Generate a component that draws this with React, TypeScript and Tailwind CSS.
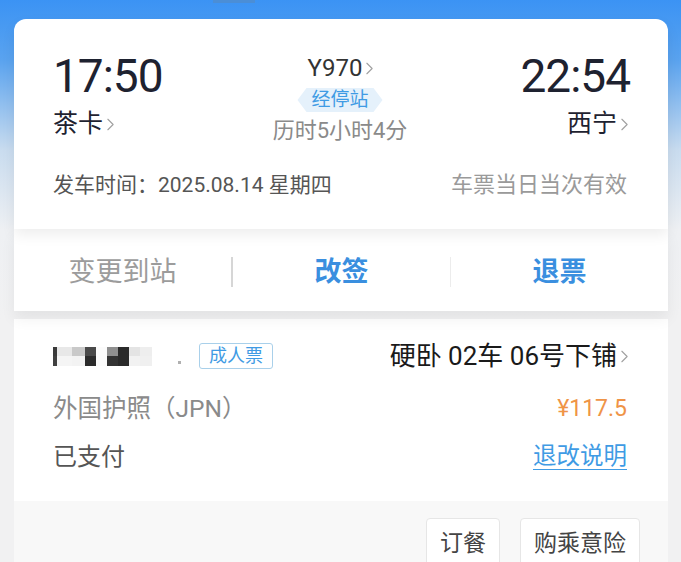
import { ChevronRight } from "lucide-react"

const font = { fontFamily: 'Roboto, "Noto Sans CJK SC", sans-serif' }

function Chevron() {
  return <ChevronRight className="-ml-[3px] -mr-[8px] inline-block h-[21px] w-[21px] shrink-0 text-[#a0a0a0]" strokeWidth={1.3} />
}

// pixelated (blurred) passenger name
const mosaicTop = ["#3a3a3a", "#e8e8e8", "#c9c9c9", "#4a4a4a", "#fbfbfb", "#8f8f8f", "#2a2a2a", "#e4e4e4", "#eeeeee"]
const mosaicBottom = ["#404040", "#f5f5f5", "#f3f3f3", "#2b2b2b", "#fbfbfb", "#333333", "#2a2a2a", "#f2f2f2", "#f0f0f0"]
const mosaicWidths = [4, 15, 13, 11, 11, 11, 11, 11, 12]

export default function App() {
  return (
    <div
      className="h-[562px] w-[681px] overflow-hidden bg-[linear-gradient(180deg,#3b93f4_0px,#5aa3ef_60px,#c9dcef_150px,#eef0f3_230px,#f1f1f2_320px)]"
      style={font}
    >
      <div className="ml-[213px] h-[3px] w-[42px] bg-[#4b8ed6]" />

      <div className="ml-[14px] mt-[16px] w-[654px]">
        {/* trip card */}
        <div className="relative z-10 rounded-t-[12px] bg-white pb-[30px] pl-[39px] pr-[41px] pt-[32px] shadow-[0_6px_14px_rgba(0,0,0,0.07)]">
          <div className="grid grid-cols-[1fr_auto_1fr]">
            <div>
              <div className="text-[46px] leading-[50px] tracking-[-1px] text-[#1e2230]">17:50</div>
              <div className="mt-[8px] flex items-center text-[25px] leading-[30px] text-[#1e2230]">
                茶卡<Chevron />
              </div>
            </div>
            <div className="-mb-[8px] flex flex-col items-center">
              <div className="mt-[5px] flex items-center text-[24px] leading-[24px] text-[#333]">
                Y970<Chevron />
              </div>
              <div className="mt-[8px] bg-[#e5f1fb] px-[14px] text-[19px] leading-[24px] text-[#3f9be4] [clip-path:polygon(9px_0,calc(100%-9px)_0,100%_50%,calc(100%-9px)_100%,9px_100%,0_50%)]">
                经停站
              </div>
              <div className="mt-[6px] text-[22px] leading-[26px] text-[#8a8a8a]">历时5小时4分</div>
            </div>
            <div className="flex flex-col items-end">
              <div className="-mr-[3px] text-[46px] leading-[50px] tracking-[-1px] text-[#1e2230]">22:54</div>
              <div className="mt-[8px] flex items-center text-[25px] leading-[30px] text-[#1e2230]">
                西宁<Chevron />
              </div>
            </div>
          </div>
          <div className="mt-[32px] flex items-center justify-between leading-[28px]">
            <span className="text-[21px] text-[#555]">发车时间：2025.08.14 星期四</span>
            <span className="text-[22px] text-[#9a9a9a]">车票当日当次有效</span>
          </div>
        </div>

        {/* actions */}
        <div className="relative z-0 flex h-[82px] items-center bg-white pt-[4px] shadow-[0_8px_14px_rgba(0,0,0,0.06)]">
          <div className="flex flex-1 justify-center text-[27px] text-[#9c9c9c]">变更到站</div>
          <div className="h-[30px] w-[2px] bg-[#d6d6d6]" />
          <div className="flex flex-1 justify-center text-[27px] font-bold text-[#3a8fdf]">改签</div>
          <div className="h-[30px] w-px bg-[#ececec]" />
          <div className="flex flex-1 justify-center text-[27px] font-bold text-[#3a8fdf]">退票</div>
        </div>

        {/* passenger */}
        <div className="mt-[8px] bg-white pb-[29px] pl-[39px] pr-[41px] pt-[22px]">
          <div className="flex h-[30px] items-center justify-between">
            <div className="flex items-center">
              <div className="flex flex-col">
                <div className="flex h-[9px]">
                  {mosaicTop.map((c, i) => (
                    <div key={i} style={{ backgroundColor: c, width: mosaicWidths[i] }} />
                  ))}
                </div>
                <div className="flex h-[10px]">
                  {mosaicBottom.map((c, i) => (
                    <div key={i} style={{ backgroundColor: c, width: mosaicWidths[i] }} />
                  ))}
                </div>
              </div>
              <span className="ml-[26px] mt-[12px] h-[3px] w-[3px] bg-[#b0b0b0]" />
              <span className="ml-[18px] rounded-[3px] border border-[#a9d0ea] px-[9px] text-[18px] leading-[24px] text-[#3f9be4]">
                成人票
              </span>
            </div>
            <div className="flex items-center text-[26px] text-[#1a1a1a]">
              硬卧 02车 06号下铺<Chevron />
            </div>
          </div>
          <div className="mt-[23px] flex h-[30px] items-center justify-between">
            <span className="text-[24.5px] text-[#8a8a8a]">外国护照（JPN）</span>
            <span className="text-[23px] text-[#ef9447]">¥117.5</span>
          </div>
          <div className="mt-[18px] flex h-[30px] items-center justify-between">
            <span className="text-[24px] text-[#555]">已支付</span>
            <span className="text-[23.5px] text-[#3f9be4] underline decoration-1 underline-offset-[5px]">退改说明</span>
          </div>
        </div>

        {/* extras */}
        <div className="flex h-[90px] justify-end gap-[20px] bg-[#f8f8f8] pr-[28px] pt-[17px]">
          <div className="flex h-[52px] items-center rounded-[4px] border border-[#e6e6e6] bg-white px-[13px] text-[23px] text-[#444]">订餐</div>
          <div className="flex h-[52px] items-center rounded-[4px] border border-[#e6e6e6] bg-white px-[13px] text-[23px] text-[#444]">购乘意险</div>
        </div>
      </div>
    </div>
  )
}
